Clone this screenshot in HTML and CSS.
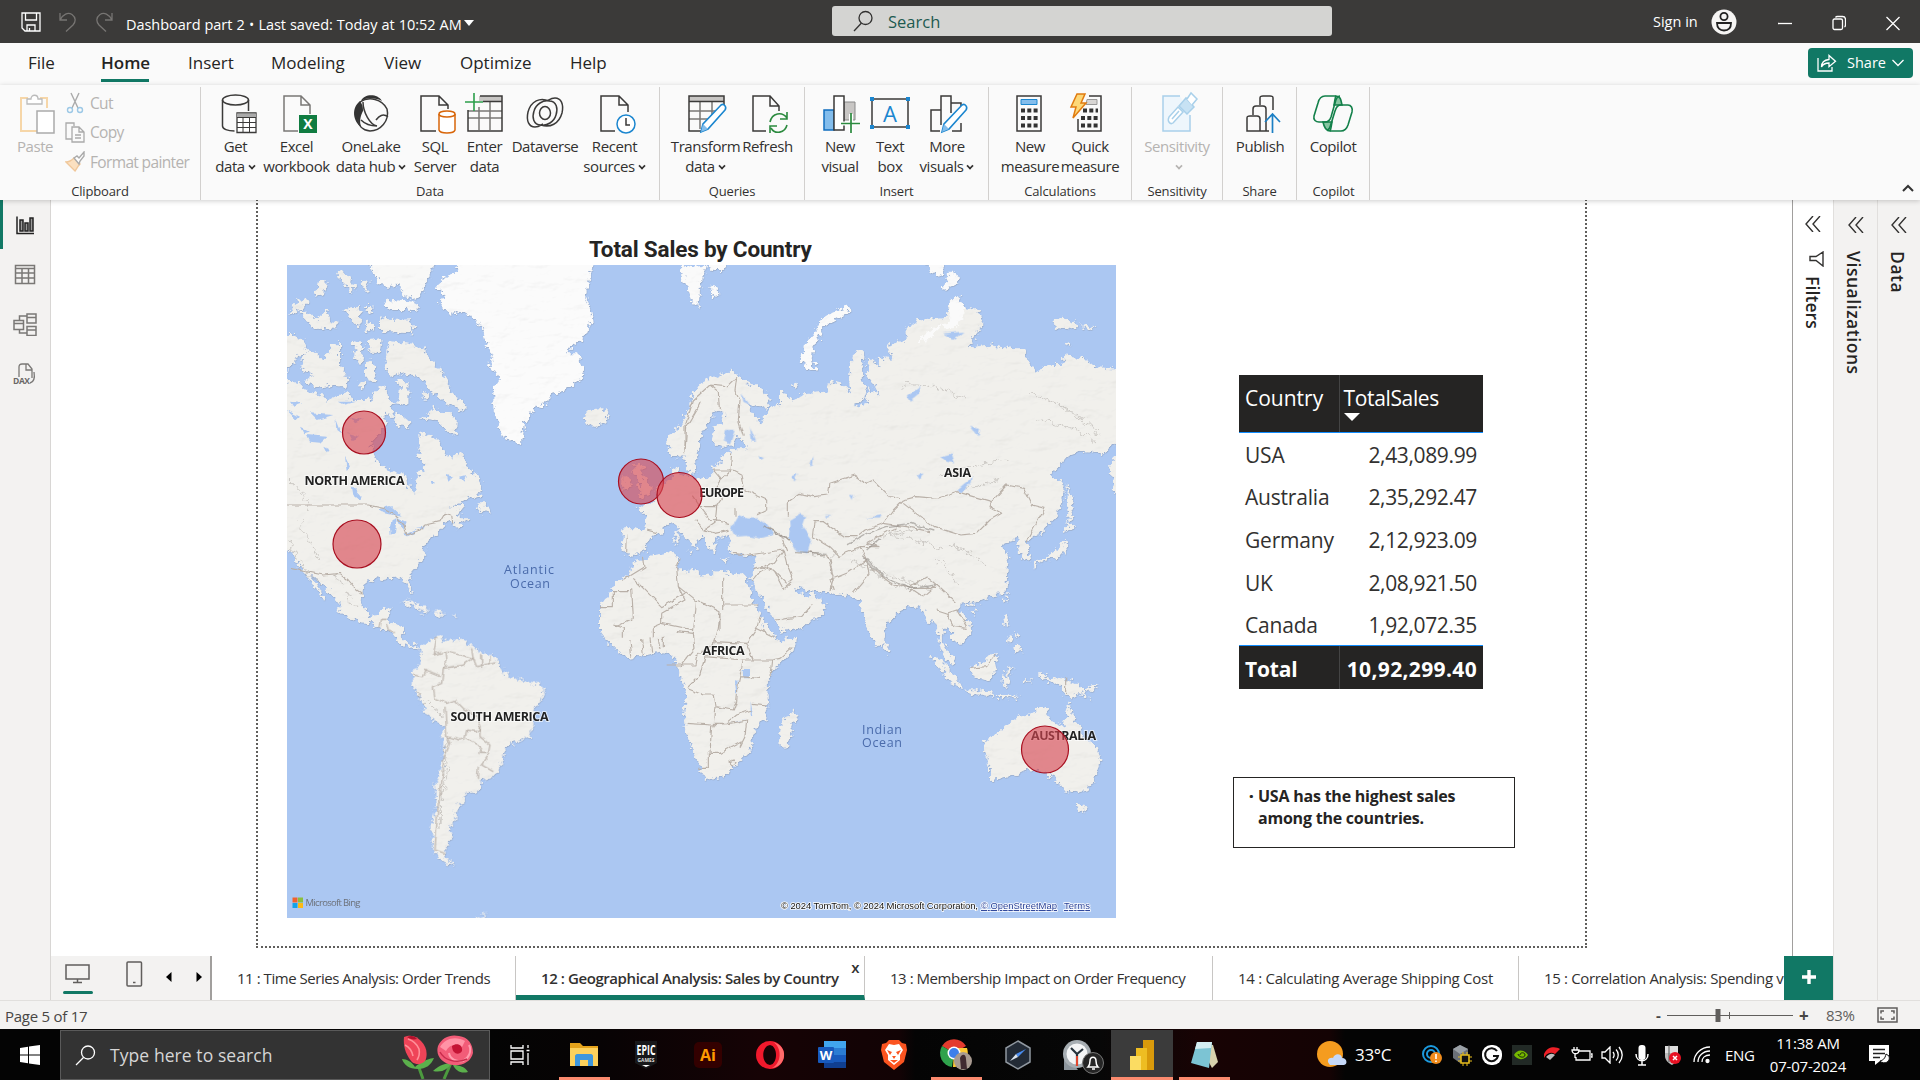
FILE: index.html
```html
<!DOCTYPE html>
<html lang="en">
<head>
<meta charset="utf-8">
<title>Dashboard part 2</title>
<link rel="stylesheet" href="styles.css">
</head>
<body>
<header class="titlebar">
  <div class="quick">
    <svg width="20" height="20" viewBox="0 0 20 20" class="ln white"><path d="M1 1h18v18H4l-3-3zM4.500 1v7h11V1M6 19v-6h8v6M8.500 19v-3"/></svg>
    <svg width="18" height="20" viewBox="0 0 18 20" class="ln dim"><path d="M1 1v7h7M1 8C4 2 9 0 13 2.500c4 3 4 7 1 10.500L7 19.500"/></svg>
    <svg width="18" height="20" viewBox="0 0 18 20" class="ln dim"><path d="M17 1v7h-7M17 8C14 2 9 0 5 2.500c-4 3-4 7-1 10.500l7 6.500"/></svg>
  </div>
  <span class="doc">Dashboard part 2 <b>•</b> Last saved: Today at 10:52 AM</span>
  <i class="caret"></i>
  <div class="search">
    <svg width="20" height="22" viewBox="0 0 20 22" class="ln"><circle cx="12.500" cy="8" r="6.500"/><path d="M8.500 13 1 21"/></svg>
    <span>Search</span>
  </div>
  <div class="account">
    <span class="signin">Sign in</span>
    <svg width="26" height="26" viewBox="0 0 26 26"><circle cx="13" cy="13" r="12.500" fill="#f6f5f4"/><g fill="none" stroke="#222" stroke-width="1.800"><circle cx="13" cy="7.500" r="3.600"/><path d="M6 14h14c0 5-3 7.500-7 7.500S6 19 6 14z"/></g></svg>
    <svg width="14" height="16" viewBox="0 0 14 16" class="ln white win"><path d="M0 8.500h14"/></svg>
    <svg width="14" height="16" viewBox="0 0 14 16" class="ln white win"><rect x="1" y="4" width="9.500" height="10.500" rx="1.500"/><path d="M3.500 2.500c.500-1 1-1 2-1h5c2 0 3 1 3 3v5c0 1 0 2-1 2.500"/></svg>
    <svg width="14" height="16" viewBox="0 0 14 16" class="ln white win"><path d="m.500 2 13 13M13.500 2l-13 13"/></svg>
  </div>
</header>

<nav class="menu">
  <a class="m1">File</a><a class="m2 on">Home</a><a class="m3">Insert</a><a class="m4">Modeling</a><a class="m5">View</a><a class="m6">Optimize</a><a class="m7">Help</a>
  <button class="share">
    <svg width="20" height="18" viewBox="0 0 20 18" class="ln white"><path d="M1 4v13h14v-4M4.500 13c0-5 3-7 7.500-7.500V1.500l6.500 5.700-6.500 5.500V9C8 9 6 10 4.500 13z"/></svg>
    <span>Share</span>
    <svg width="12" height="8" viewBox="0 0 12 8" class="ln white"><path d="m.500 1 5.500 5.500L11.500 1"/></svg>
  </button>
</nav>

<section class="ribbon">
  <div class="group clip">
    <div class="tools">
      <div class="tool off paste"><svg class="ic" viewBox="0 0 40 40"><g fill="none" stroke="#f6d6a8" stroke-width="2"><path d="M13 5H6v33h17M25 5h7v10"/></g><path d="M12 11V6h4c0-5 7-5 7 0h4v5z" fill="#fff" stroke="#bbb" stroke-width="1.300"/><rect x="22" y="18" width="17" height="22" fill="#fff" stroke="#aaa" stroke-width="1.500"/></svg><span>Paste</span></div>
      <div class="small">
        <div><svg width="20" height="22" viewBox="0 0 20 22" fill="none" stroke-width="1.400"><path d="m6 1 7 15M14 1 7 16" stroke="#aaa"/><circle cx="5" cy="18" r="2.500" stroke="#9cc8e6"/><circle cx="15" cy="18" r="2.500" stroke="#9cc8e6"/></svg>Cut</div>
        <div><svg width="20" height="22" viewBox="0 0 20 22" fill="none" stroke="#aaa" stroke-width="1.300"><path d="M7 18H1V2h8v3M7 6h7l5 5v10H7zM14 6v5h5M10 14h6M10 17h6"/></svg>Copy</div>
        <div><svg width="20" height="22" viewBox="0 0 20 22" fill="none" stroke-width="1.400"><path d="M1 11c3 0 5-1 8-4l6 6c-2 2-3 4-5 7z" fill="#fbe0c0" stroke="#f0c79a"/><path d="m9 7 3-2 2 2 5-6 0 4-4 5-1 3z" stroke="#aaa" fill="#fff"/></svg>Format painter</div>
      </div>
    </div>
    <div class="gl">Clipboard</div>
  </div>
  <div class="group data">
    <div class="tools">
      <div class="tool" style="width:53px"><svg class="ic" viewBox="0 0 40 40"><g class="ink"><ellipse cx="19.500" cy="7" rx="13" ry="5"/><path d="M6.500 7v26c0 3 5 5 12 5M32.500 7v11"/></g><path d="M21 20h19v19.500H21z" fill="#fff" stroke="#3b3a39" stroke-width="1.300"/><path d="M21 20.500h19v4H21z" fill="#aaa"/><path d="M21 24.500h19M21 29.500h19M21 34.500h19M27 24v15M33.500 24v15" stroke="#3b3a39"/></svg><span>Get<br>data<i class="v"></i></span></div>
      <div class="tool" style="width:69px"><svg class="ic" viewBox="0 0 40 40"><path class="ink lite" d="M21 38H7V3h17l9 9v9M24 3v9h9"/><path d="M22 22h18v18H22z" fill="#107c41"/><text x="31" y="36" text-anchor="middle" fill="#fff" font-size="14" font-weight="700">X</text></svg><span>Excel<br>workbook</span></div>
      <div class="tool" style="width:80px"><svg class="ic" viewBox="0 0 40 40"><path d="M10 8c3-7 16-8 21 0-6-3-14-4-21 0zM9 8C0 15 2 28 10 34c-2-7 0-12 2-16 0-5-1-7-3-10z" fill="#333"/><g class="ink"><path d="M9 9c9-6 22-3 27 7 3 12-7 22-17 22-8-1-12-6-12-12M12 9c0 10 7 23 14 24-8 0-12-2-16-6M37 24c-5-4-9-1-12 3"/></g></svg><span>OneLake<br>data hub<i class="v"></i></span></div>
      <div class="tool" style="width:48px"><svg class="ic" viewBox="0 0 40 40"><path class="ink" d="M21 38H6V3h18l9 9v4M24 3v9h9"/><path d="M24 21v16c1 4 15 4 16 0V21" fill="#fff" stroke="#d8660a" stroke-width="1.500"/><ellipse cx="32" cy="21" rx="8" ry="3" fill="#fff" stroke="#d8660a" stroke-width="1.500"/></svg><span>SQL<br>Server</span></div>
      <div class="tool" style="width:51px"><svg class="ic" viewBox="0 0 40 40"><path d="M14 3h23v5H14z" fill="#c8c6c4"/><path class="ink lite" d="M3 25h34M3 18h34M14 14v23M25 9v28"/><path class="ink" d="M15 3h22v35H3V17M18 8.500h19"/><path d="M9 0v18M0 9h18" stroke="#2c9f4b" stroke-width="1.600"/></svg><span>Enter<br>data</span></div>
      <div class="tool" style="width:70px"><svg class="ic" viewBox="0 0 40 40"><g class="ink"><path d="M24 8C15 4 6 8 3 19c-2 9 1 15 7 15 4 0 6-2 8-3M16 32c9 3 18-1 21-12 2-9-1-15-7-15-4 0-6 2-8 3M24 8c8 0 9 8 7 14-2 7-9 11-15 10M16 32c-8 0-9-8-7-14C11 11 18 7 24 8"/><ellipse cx="20" cy="20" rx="5.500" ry="6.500"/></g></svg><span>Dataverse</span></div>
      <div class="tool" style="width:69px"><svg class="ic" viewBox="0 0 40 40"><path class="ink" d="M20 38H6V3h18l9 9v7M24 3v9h9"/><circle cx="31" cy="31" r="9" fill="#fff" stroke="#1b86cf" stroke-width="1.500"/><path d="M31 25v7h4" class="ink"/></svg><span>Recent<br>sources<i class="v"></i></span></div>
    </div>
    <div class="gl">Data</div>
  </div>
  <div class="group queries">
    <div class="tools">
      <div class="tool" style="width:75px"><svg class="ic" viewBox="0 0 40 40"><path d="M3 3h35v5H3z" fill="#c8c6c4"/><path class="ink lite" d="M3 18h28M3 26h20M14 9v27M26 9v13"/><path class="ink" d="M15 38H3V3h35v10M3 8.500h35"/><path d="m15 39 2-8 18-19c3-2 6 2 4 5L22 36z" fill="#fff" stroke="#1b86cf" stroke-width="1.600"/><path d="m15 39 2-8 5 5z" fill="#83bdec"/></svg><span>Transform<br>data<i class="v"></i></span></div>
      <div class="tool" style="width:49px"><svg class="ic" viewBox="0 0 40 40"><path class="ink" d="M18 38H5V3h17l9 10v5M22 3v10h9"/><path d="M22 29c2-9 12-11 17-4M39 19v7h-7M39 32c-2 8-12 10-16 3M22 40v-7h7" fill="none" stroke="#2b8a3e" stroke-width="1.600"/></svg><span>Refresh</span></div>
    </div>
    <div class="gl">Queries</div>
  </div>
  <div class="group insert">
    <div class="tools">
      <div class="tool" style="width:54px"><svg class="ic" viewBox="0 0 40 40"><path d="M24 9h11v18H24z" fill="#c8c6c4" stroke="#888"/><path d="M4 17h10v20H4z" fill="#83bdec" stroke="#106ebe" stroke-width="1.500"/><path d="M14 3h10v34H14z" fill="#fff" stroke="#3b3a39" stroke-width="1.500"/><path d="M31 21v19M21 30.500h19" stroke="#fff" stroke-width="4"/><path d="M31 20v20M21 30.500h19" stroke="#2b8a3e" stroke-width="1.700"/></svg><span>New<br>visual</span></div>
      <div class="tool" style="width:46px"><svg class="ic" viewBox="0 0 40 40"><path class="ink" d="M2 6h36v28H2z"/><path d="M0 4h4v4H0zM36 4h4v4h-4zM0 32h4v4H0zM36 32h4v4h-4z" fill="#1b86cf"/><text x="20" y="28.500" text-anchor="middle" font-size="22" fill="#1b86cf">A</text></svg><span>Text<br>box</span></div>
      <div class="tool" style="width:68px"><svg class="ic" viewBox="0 0 40 40"><path class="ink" d="M14 17H4v21h9M14 32V3h10v17M24 10h10v6M34 30v8h-9"/><path d="m15 39 2-8 18-19c3-2 6 2 4 5L22 36z" fill="#fff" stroke="#1b86cf" stroke-width="1.600"/><path d="m15 39 2-8 5 5z" fill="#83bdec"/></svg><span>More<br>visuals<i class="v"></i></span></div>
    </div>
    <div class="gl">Insert</div>
  </div>
  <div class="group calc">
    <div class="tools">
      <div class="tool" style="width:60px"><svg class="ic" viewBox="0 0 40 40"><path class="ink" d="M7 3h24v35H7z"/><path d="M11 6.500h16v5H11z" fill="#83bdec" stroke="#1b86cf"/><path d="M11 17.500h17M11 25h17M11 32.500h17" stroke="#333" stroke-width="4" stroke-dasharray="4 2.300"/></svg><span>New<br>measure</span></div>
      <div class="tool" style="width:60px"><svg class="ic" viewBox="0 0 40 40"><path class="ink" d="M19 3h12v35H8V26"/><path d="M17 6.500h10v5H16z" fill="#d8d6d4" stroke="#999"/><path d="M13 17.500h15M11 25h17M11 32.500h17" stroke="#333" stroke-width="4" stroke-dasharray="4 2.300"/><path d="M7 1h8l-4 9h5L3 25l3-11H1z" fill="#fdd878" stroke="#e07b10" stroke-width="1.500"/></svg><span>Quick<br>measure</span></div>
    </div>
    <div class="gl">Calculations</div>
  </div>
  <div class="group sens">
    <div class="tools">
      <div class="tool off" style="width:80px"><svg class="ic" viewBox="0 0 40 40"><g fill="#fff" stroke="#a9d0ea" stroke-width="1.500"><path d="M23 3H6v35h27V22" fill="#eef6fc"/><path d="m12 24 9-10 5 5-10 11c-3 2-6-2-4-6zm3 2 7-8"/><path d="m22 13 7-8 8 9-7 7z" fill="#c7e2f4"/><path d="m30 6 4-6 6 6-5 6"/></g></svg><span>Sensitivity<br><i class="v"></i></span></div>
    </div>
    <div class="gl">Sensitivity</div>
  </div>
  <div class="group pub">
    <div class="tools">
      <div class="tool" style="width:64px"><svg class="ic" viewBox="0 0 40 40"><path class="ink" d="M20 38H7V25c0-2 1-2 3-2h7c2 0 3 1 3 3zM13 22v-6c0-2 1-3 3-3h7c2 0 3 1 3 3v22h-6M20 12V5c0-2 1-2 3-2h7c2 0 3 0 3 2v12M26 38h3"/><path d="M32.500 40V21M25 29l7.500-8 7.500 8" fill="none" stroke="#1b7fc4" stroke-width="1.700"/></svg><span>Publish</span></div>
    </div>
    <div class="gl">Share</div>
  </div>
  <div class="group cop">
    <div class="tools">
      <div class="tool" style="width:60px"><svg class="ic" viewBox="0 0 40 40"><g fill="none" stroke="#13804a" stroke-width="1.600"><path d="M23 3c4 0 5 3 6 9h-8c1-5 1-8 2-9zM17 38c-4 0-6-4-7-9h9c-1 5-1 8-2 9z" fill="#86c5a1"/><path d="M23 3H12C8 3 6 6 5 10L1 23c-1 4 2 6 5 6h6c4 0 5-2 6-5l4-14c1-4 2-7 5-7M17 38h11c4 0 6-3 7-6l4-13c1-4-1-7-4-7h-7c-4 0-5 3-6 6l-4 13c-1 4-2 6-4 6"/></g></svg><span>Copilot</span></div>
    </div>
    <div class="gl">Copilot</div>
  </div>
  <svg class="collapse" width="12" height="8" viewBox="0 0 12 8"><path d="m1 7 5-5 5 5" fill="none" stroke="#333" stroke-width="2"/></svg>
</section>

<main class="work">
  <aside class="rail">
    <div class="on"><svg width="24" height="24" viewBox="0 0 24 24" fill="#999" stroke="#222" stroke-width="1.500"><path d="M4 3.500v17h17" fill="none"/><path d="M7 7h3v11H7zM12 10h3v8h-3zM17 5h3v13h-3z"/></svg></div>
    <div><svg width="24" height="24" viewBox="0 0 24 24" fill="none" stroke="#7a7876" stroke-width="1.500"><path d="M2.500 3.500h19v18h-19zM2.500 6.500h19M2.500 11h19M2.500 16h19M9 6.500v15M15.500 6.500v15"/></svg></div>
    <div><svg width="24" height="24" viewBox="0 0 24 24" fill="none" stroke="#7a7876" stroke-width="1.500"><path d="M1 8.500h9.500v9H1zM14 2h9v9h-9zM14 14.500h9v9h-9zM1 11.500h9.500M14 5.500h9M14 18h9M6.500 8V4H14M6.500 18v3H14"/></svg></div>
    <div><svg width="24" height="24" viewBox="0 0 24 24" fill="none" stroke="#7a7876" stroke-width="1.300"><path d="M6 15V5c0-2 1-3 3-3h6l4 5v9M13 2v6h6M21 10c1 6 0 10-4 11"/><text x="0" y="22" fill="#6a6866" stroke="none" font-size="8.500" font-weight="700" textLength="17">DAX</text></svg></div>
  </aside>

  <div class="center">
    <div class="canvas">
      <div class="page"></div>
      <h2 class="vtitle">Total Sales by Country</h2>
      <svg class="map" width="829" height="653" viewBox="287 265 829 653">
        <defs>
          <filter id="coast" x="-5%" y="-5%" width="110%" height="110%">
            <feTurbulence type="fractalNoise" baseFrequency=".2" numOctaves="3" seed="4" result="n"/>
            <feDisplacementMap in="SourceGraphic" in2="n" scale="10" xChannelSelector="R" yChannelSelector="G" result="d"/>
            <feTurbulence type="fractalNoise" baseFrequency=".035 .07" numOctaves="4" seed="9" result="m"/>
            <feDiffuseLighting in="m" surfaceScale="2.600" lighting-color="#fff" result="l"><feDistantLight azimuth="225" elevation="62"/></feDiffuseLighting>
            <feColorMatrix in="l" values=".28 0 0 0 .76  0 .28 0 0 .76  0 0 .28 0 .76  0 0 0 1 0" result="l2"/>
            <feBlend in="d" in2="l2" mode="multiply" result="b"/>
            <feComposite in="b" in2="d" operator="in" result="c"/>
            <feDropShadow in="c" dx=".4" dy=".7" stdDeviation=".5" flood-color="#8a93a3" flood-opacity=".55"/>
          </filter>
          <filter id="rough"><feTurbulence type="fractalNoise" baseFrequency=".12" numOctaves="2" seed="2"/><feDisplacementMap in="SourceGraphic" scale="5" xChannelSelector="R" yChannelSelector="G"/></filter>
          <filter id="ridge"><feTurbulence type="fractalNoise" baseFrequency=".15" numOctaves="3" seed="6"/><feDisplacementMap in="SourceGraphic" scale="12" xChannelSelector="R" yChannelSelector="G"/></filter>
        </defs>
        <path fill="#abc7f2" d="M287 265h829v653H287z"/>
        <g filter="url(#coast)" fill="#f1f0ec">
          <g transform="translate(280 220) scale(.33333)">
            <path d="M0 480 60 490 75 510 120 525 145 540 175 525 205 520 215 540 260 540 285 520 300 500 320 505 325 540 355 550 360 500 345 480 360 475 385 495 385 545 365 555 345 540 335 565 340 595 320 580 310 590 320 620 300 640 275 665 275 690 290 720 305 740 330 750 365 758 385 775 390 805 405 825 415 790 410 770 430 745 440 735 415 710 420 680 415 645 440 640 475 660 490 700 515 710 540 695 555 720 560 740 590 765 610 800 605 820 570 835 540 850 500 865 545 855 555 865 535 870 540 895 575 895 560 905 525 925 515 900 495 910 480 925 465 950 440 960 430 990 440 1000 425 1020 390 1060 385 1075 398 1115 390 1120 375 1085 355 1072 330 1075 310 1080 290 1075 270 1080 250 1095 245 1140 255 1170 270 1188 295 1185 308 1165 335 1162 325 1190 320 1205 345 1210 370 1225 365 1255 375 1265 395 1278 410 1270 425 1282 415 1285 400 1282 385 1285 365 1272 345 1255 330 1235 300 1225 270 1210 240 1207 210 1195 175 1175 180 1155 150 1120 125 1090 105 1070 90 1055 100 1080 120 1110 137 1142 125 1135 100 1095 80 1065 60 1040 40 1010 0 960z"/>
            <path d="M375 370 430 380 440 410 475 440 500 480 515 520 560 555 550 575 520 560 490 540 450 510 430 480 400 465 370 460 330 470 315 440 320 390 330 365 355 370zM65 420 80 390 110 400 130 420 150 390 155 370 180 370 180 440 205 475 195 500 150 495 110 505 75 480 100 465 60 445zM0 345 45 345 80 370 75 400 50 410 35 440 0 470zM215 370 245 360 250 400 240 435 220 410 230 390zM265 360 305 355 300 395 270 395zM255 425 280 420 290 480 270 485 255 465zM300 290 330 300 395 298 400 340 300 335zM170 155 200 160 230 200 215 215 180 180zM240 180 265 185 265 210 245 205zM110 190 140 180 135 220 105 230zM25 285 50 240 85 235 70 265zM55 275 85 275 110 300 140 265 150 300 175 305 160 330 100 325 80 300zM190 270 235 260 245 300 235 320 215 300zM255 255 280 255 280 280 260 275zM258 305 280 310 278 335 260 330zM425 515 445 520 440 540 425 535zM340 590 355 580 390 605 385 620 350 615zM455 555 480 575 515 580 530 600 528 645 500 630 470 600 420 595 455 580zM235 485 255 485 255 505 240 505zM590 850 620 850 635 880 590 870zM910 590 930 570 960 565 985 575 980 600 950 620 925 612z"/>
            <path fill="#f8f8f7" d="M260 125 470 125 445 170 430 210 410 240 370 225 360 190 330 200 300 195 280 155zM310 250 330 240 410 245 410 275 380 270 330 270z"/>
            <path fill="#fbfbfb" d="M535 125 938 125 930 180 915 230 930 260 935 310 905 360 880 375 860 400 890 400 912 450 905 475 860 510 820 520 800 550 760 565 735 610 725 675 700 665 670 650 650 600 640 560 640 510 660 480 625 430 640 410 615 360 610 330 585 295 540 275 510 285 475 245 500 230 465 200 500 170 530 155z"/>
            <path d="M1060 730 1080 725 1090 740 1085 765 1100 780 1105 800 1118 805 1110 825 1070 832 1085 815 1070 805 1085 790 1070 775 1060 760zM1030 770 1050 765 1055 795 1030 810zM1183 940 1193 940 1192 975 1183 970z"/>
            <path d="M1240 725 1230 760 1200 775 1195 740 1180 745 1178 775 1150 790 1130 810 1130 830 1110 850 1070 865 1095 880 1100 910 1100 930 1060 925 1030 925 1025 985 1030 1000 1060 1005 1090 1000 1110 955 1130 945 1160 920 1180 900 1200 900 1210 925 1240 970 1255 965 1300 920 1400 900 1400 780 1240 780z"/>
          </g>
          <g transform="translate(680 240) scale(.33333)">
            <path d="M20 690 40 698 50 690 45 660 60 620 60 590 80 560 95 530 105 510 130 515 125 545 105 560 95 590 105 615 130 620 160 615 170 590 190 600 200 625 165 625 120 650 125 670 95 680 100 700 85 715 55 712 40 725 10 720-10 715-10 690-25 700-10 800-20 845-5 870 30 905 40 925 52 922 42 905 60 908 45 890 15 860 20 845 45 860 75 895 85 925 100 940 110 925 100 905 120 890 150 885 155 905 140 920 155 940 200 945 230 945 220 985 210 1020 700 1100 980 1060 980 1010 960 960 985 945 945 920 980 905 1020 895 1010 920 1035 965 1050 960 1040 905 1080 880 1130 830 1150 770 1150 725 1110 710 1160 650 1200 635 1270 640 1330 590 1330 390 1250 385 1220 360 1160 345 1140 375 1110 375 1070 395 1035 350 1040 325 1000 325 920 315 860 325 880 300 910 250 895 210 850 200 830 165 805 190 800 230 720 240 680 265 680 300 620 315 640 360 590 350 600 385 565 350 560 400 580 430 600 470 565 445 560 490 535 500 520 492 550 480 560 450 545 420 550 345 535 330 515 350 505 420 515 460 490 435 450 425 440 455 370 460 335 485 320 460 300 455 300 495 260 510 245 550 215 520 200 490 240 505 265 500 270 475 240 440 200 430 180 405 150 395 100 410 60 430 35 470 20 520 0 560-40 590-35 630-25 655 10 645z"/>
            <path fill="#fafafa" d="M365 365 375 310 400 285 415 245 460 215 510 195 515 210 480 230 440 250 420 285 400 320 395 360 410 395 390 390zM0 85 20 75 50 80 75 75 70 110 60 150 55 205 40 190 25 150 10 120zM90 140 115 145 118 165 100 170zM75 65 140 65 130 90 95 90zM735 65 790 65 785 110 760 100zM800 110 820 90 838 130 790 150zM805 190 830 165 850 200 850 240 820 265 780 260 740 300 715 305 760 265 810 240z"/>
            <path d="M1120 235 1150 230 1165 245 1190 240 1185 265 1150 260 1125 270zM1205 250 1240 265 1230 272 1205 265zM1155 305 1175 315 1165 322zM1160 730 1172 760 1178 810 1168 850 1160 790zM1165 850 1185 862 1165 878 1150 870zM1155 900 1160 935 1130 950 1100 960 1075 970 1065 990 1062 970 1100 950 1130 930 1145 905zM1290 670 1320 640 1320 750 1300 760zM335 430 348 432 342 442zM20 935 40 935 35 942zM120 955 145 960 135 965z"/>
          </g>
          <g transform="translate(680 560) scale(.33333)">
            <path d="M215 55 235 0 400-60 960-60 985 0 980 60 960 85 920 115 880 135 850 130 830 145 870 190 875 220 840 255 815 235 820 215 790 205 785 240 800 270 825 300 820 318 790 290 780 250 775 210 760 180 740 190 730 150 700 130 690 110 690 135 660 155 620 190 615 235 600 260 585 250 560 200 550 150 530 140 545 125 520 110 460 100 400 95 350 80 340 55 330 55 345 90 375 115 400 100 437 130 425 165 370 200 300 215 285 180 260 140 230 90z"/>
            <path d="M0 35 50 30 60 50 95 45 110 30 150 40 200 45 205 70 215 110 240 160 260 200 285 225 290 245 355 230 340 270 290 320 260 370 265 440 260 480 225 500 215 560 185 600 130 650 75 660 65 630 40 580 20 520 12 470 20 390-5 340-10 300-30 280-60 275-100 285-155 295-200 265-240 215-240 140-200 80-155 45-140 5-100 0-75-15-20-25-5 0z"/>
            <path d="M915 540 960 515 990 490 1020 465 1035 475 1060 460 1075 440 1105 445 1100 470 1150 500 1165 430 1180 470 1195 490 1215 540 1250 560 1262 600 1240 660 1225 690 1190 700 1150 690 1130 660 1120 640 1105 655 1095 635 1040 630 1000 650 930 660 930 620 912 570zM1188 732 1218 735 1212 758 1200 758zM340 450 352 465 335 510 320 560 300 565 297 530 305 490zM612 245 625 262 625 278 613 275zM752 285 780 300 820 340 845 375 840 382 810 365 780 325zM845 390 880 388 935 398 940 408 880 402zM950 405 1020 408 1010 415 955 414zM870 325 905 310 935 280 958 288 945 310 950 330 930 362 885 355zM965 345 985 350 975 330 1010 322 985 342 990 370 970 378zM1070 340 1090 340 1100 360 1140 352 1190 370 1235 418 1200 400 1170 412 1150 400 1140 375 1105 365zM1215 385 1245 375 1255 365 1250 385 1225 392zM970 165 985 170 985 200 975 205zM1000 262 1020 255 1027 275 1005 280zM985 225 1000 235 990 248zM1005 215 1018 225 1012 235zM872 150 885 152 880 165zM972 110 985 105 978 130zM1025 360 1060 362 1040 368z"/>
          </g>
          <g transform="translate(280 560) scale(.33333)">
            <path d="M420 265 470 225 490 240 550 240 590 270 640 290 665 320 670 340 720 360 780 375 800 395 760 450 760 490 745 530 680 560 670 600 640 650 600 660 605 690 555 705 555 730 530 735 525 780 505 800 520 820 495 875 500 895 525 915 490 905 460 870 455 800 470 740 465 680 490 600 490 500 440 460 410 400 395 370 400 330 425 310zM365 128 390 122 430 142 450 150 430 153 400 138zM455 155 480 150 500 162 470 168zM415 166 430 166 425 171zM515 165 528 166 520 171zM575 1085 595 1070 620 1060 600 1080z"/>
          </g>
        </g>
        <g filter="url(#ridge)" fill="none" stroke="#a9a49f" stroke-width="1" opacity=".5">
          <path d="M850 560c15 8 25 12 35 15s30 10 48 12M853 553c20-14 45-24 70-24M880 535c20 0 40 5 60 14M866 565c14 14 32 22 50 25M1030 392c20 8 45 20 70 40M1040 420c20 5 40 8 55 22M1060 405c14 12 25 18 40 30M765 530c10 3 20 6 30 14M795 548c10 5 25 8 40 8M940 475c20-4 45-14 70-15M960 490c15-2 30-6 44-14M440 830c0-30 5-60 6-90M448 760c0 20-8 40-9 70M417 690c8 12 18 22 28 28M290 540c5 20 18 35 30 45M300 520c5 15 12 30 20 40M335 575c8 12 14 24 22 34M290 480c8 8 15 16 20 30M935 560c10 4 20 14 22 26M950 545c14 5 25 10 35 22M905 385c20-4 40 4 60 14"/>
        </g>
        <g filter="url(#rough)" fill="#abc7f2">
          <g transform="translate(280 220) scale(.33333)"><path d="M295 868 330 858 365 890 340 885 315 880zM335 900 350 895 345 935 332 945 330 920zM350 890 380 905 370 930 360 915zM372 945 405 930 405 938 375 950zM405 925 435 918 430 928zM215 795 245 830 240 840 220 825zM195 710 210 740 200 750zM80 645 140 650 120 668 90 665zM20 570 60 590 50 600zM170 545 230 545 190 555zM90 580 160 585 110 600zM500 765 520 770 505 785zM60 620 90 635 70 640zM210 590 250 600 225 610zM170 600 185 640 172 630zM130 680 150 690 140 700zM450 780 465 785 455 795zM540 770 560 765 550 785zM205 640 240 650 215 660zM30 545 70 550 40 560z"/></g>
          <g transform="translate(680 240) scale(.33333)"><path d="M160 850 175 825 200 835 235 835 260 850 280 885 240 895 200 888 165 890 155 870zM330 840 360 822 378 830 368 860 395 895 382 940 348 930 325 890 332 860zM830 750 878 710 875 725 845 758zM870 560 900 570 895 592zM780 650 815 640 825 670 800 665zM680 470 720 440 720 460 690 485zM235 645 252 655 240 660zM210 560 228 605 215 605zM135 570 165 570 150 610 130 600zM335 710 355 700 340 725zM390 680 400 650 400 675zM560 835 605 825 600 835zM790 280 850 275 820 300zM510 765 522 765 518 780zM185 460 210 495 190 485zM435 828 455 828 440 833zM710 705 730 700 720 720z"/></g>
          <g transform="translate(680 560) scale(.33333)"><path d="M188 330 210 330 210 355 190 355zM165 365 172 360 175 400 168 395zM212 420 220 470 212 465zM150 490 200 475 170 485z"/></g>
        </g>
        <g filter="url(#rough)" fill="none" stroke="#b9b0a8" stroke-width="3.400" stroke-linejoin="round">
          <g transform="translate(280 220) scale(.33333)"><path d="M20 855H265L310 865 345 885 372 915 380 945 420 930 435 915 480 905 495 880 515 885 518 910M30 1045 130 1065 180 1060 205 1080 230 1110 245 1120M1215 690 1220 620 1255 560 1262 545M1042 940 1040 1000M1100 930 1130 938M1060 1075 1145 1160 1215 1120M1055 1105 1060 1195 1005 1220M1090 1005 1095 1040 1030 1080"/></g>
          <g transform="translate(680 240) scale(.33333)"><path d="M15 640 15 560 40 480 90 435 115 455 118 505M90 435 140 440 170 410 165 450 180 480 175 540 190 590M100 690 150 690 155 640M100 690 125 720 155 690 185 705 195 750 260 780 260 810 230 825M125 720 110 740M40 770 60 800 110 800 130 770M60 800 90 840 150 850M110 800 105 850 75 870 45 840M75 870 105 880 150 870M165 805 165 830M265 865 330 900M325 830 325 785 360 760 400 770 445 765 450 730 525 705 560 730 580 720 630 770 660 775M400 890 405 845 430 845 495 890 530 890 555 870 610 850 640 810 670 780 710 770 770 775 830 755 935 785 980 735 1030 745 1055 795 1095 805 1070 850 1040 905M670 790 720 830 760 860 840 885 890 880 930 840 965 820 930 800 935 785M610 850 680 860 750 875M400 890 450 920 480 950 500 935 540 920 560 960 500 1000 450 1020 460 1050M385 935 440 945 455 1000M310 930 320 970 340 1020M155 940 210 945 310 930 280 970 240 995 220 1020M300 880 320 930M240 980 280 990 320 1030M555 960 580 990 640 1035 700 1045 770 1045M540 920 600 920 560 910 650 860"/></g>
          <g stroke="#8f8a85" stroke-width="4" opacity=".6" transform="translate(680 240) scale(.33333)"><path d="M550 950 580 985 630 1020 690 1045 770 1035M500 915 560 880 620 860 690 850 760 870M560 930 600 895M250 860 330 900M345 935 440 940M560 955 610 1010"/></g>
          <g transform="translate(680 560) scale(.33333)"><path d="M128 50V150M128 135H235M50 120 120 155 115 205 105 245 50 285 45 315H-40M120 155V210M50 120 40 220-10 215M40 220 45 265 0 320M105 245 200 250 230 205 240 170M200 250 220 300 275 300 300 295 340 260M230 205 290 235M275 300 270 345M75 290 190 300 175 370 170 420 160 450 105 440 100 405 70 405 20 385M75 290 60 345 20 385M190 300H225M180 350 240 355M215 430 260 435M20 490 95 495 150 490 200 480 195 530 180 560M95 495 90 580 85 580 85 625 55 625M90 580 120 580 185 545M105 440 100 490 140 490 170 465 215 450M150 605 160 600 168 608 155 617zM-55 160 15 120-5 80-10 20 0-5M-55 160V190M-55 190-80 200-80 235M-5 80 50 125M-55 190 40 210M-65 235-60 270M-90 235-85 275M-115 240-110 285M-50 230-50 265M-150 240-145 290M-200 195-170 205-170 230M-240 140-200 140-200 95-150 95M290 180 365 170 400 130M285 35 310 85 340 60M220 30 260 15M450 0 460 55 450 90M520 100 570 40 560 0M690 100 700 90 730 110 770 75 740 50 690 80M770 75 830 130M770 150 800 160 830 150 860 200M800 160 820 200 860 205M1157 352V405M872 325 920 320 945 285"/></g>
          <g transform="translate(280 560) scale(.33333)"><path d="M470 230 460 285 495 275 500 315 490 325 485 370 460 380 465 415 500 430 525 420 550 445 590 470 600 500 595 515 560 510 555 535 540 540 500 530 495 440M500 275 580 295 575 265M580 295 590 320 650 305M605 285 605 320M630 288 630 315M490 325 550 315 580 295M430 330 480 350M400 345 430 350 440 330M560 535 605 560 600 580 625 580 630 555 600 530 600 500M630 580 605 615 640 635M595 620 592 655M500 530 510 550 490 600 490 640 475 730 470 800 465 870 495 880M300 205 305 175 320 175M320 190 325 210 345 215"/></g>
        </g>
        <g class="lands">
          <text x="304.500" y="485" textLength="100">NORTH AMERICA</text><text x="699" y="497" textLength="45">EUROPE</text><text x="944" y="476.500" textLength="27">ASIA</text><text x="702.500" y="655" textLength="42">AFRICA</text><text x="450.500" y="721" textLength="98">SOUTH AMERICA</text><text x="1031" y="740" textLength="65">AUSTRALIA</text>
        </g>
        <g class="seas">
          <text x="504" y="573.500" textLength="50">Atlantic</text><text x="510" y="587.500" textLength="40">Ocean</text><text x="862" y="733.500" textLength="40">Indian</text><text x="862" y="747" textLength="40">Ocean</text>
        </g>
        <g fill="#d64550" fill-opacity=".62" stroke="#a80f20" stroke-width="1.200">
          <circle cx="364" cy="432.500" r="21.500"/><circle cx="357" cy="544" r="24"/><circle cx="641" cy="481.500" r="22.500"/><circle cx="679.500" cy="495" r="22.500"/><circle cx="1045" cy="749.500" r="23.500"/>
        </g>
        <path fill="#f1622c" d="M292.500 897.500h5v5h-5z"/><path fill="#8bbf3c" d="M298 897.500h5v5h-5z"/><path fill="#13a3e8" d="M292.500 903h5v5h-5z"/><path fill="#fdb913" d="M298 903h5v5h-5z"/>
        <text x="305.500" y="906" class="bing" textLength="55">Microsoft Bing</text>
        <text x="781" y="909" class="credit" textLength="197">© 2024 TomTom, © 2024 Microsoft Corporation,</text>
        <text x="981" y="909" class="credit lk" textLength="76">© OpenStreetMap</text>
        <text x="1064" y="909" class="credit lk" textLength="26">Terms</text>
      </svg>
      <table class="sales">
        <thead><tr><th>Country</th><th>TotalSales<i></i></th></tr></thead>
        <tbody>
          <tr><td>USA</td><td>2,43,089.99</td></tr>
          <tr><td>Australia</td><td>2,35,292.47</td></tr>
          <tr><td>Germany</td><td>2,12,923.09</td></tr>
          <tr><td>UK</td><td>2,08,921.50</td></tr>
          <tr><td>Canada</td><td>1,92,072.35</td></tr>
        </tbody>
        <tfoot><tr><td>Total</td><td>10,92,299.40</td></tr></tfoot>
      </table>
      <div class="note"><b>·</b><p>USA has the highest sales<br>among the countries.</p></div>
    </div>
  </div>

  <aside class="pane filters"><svg class="chev" width="16" height="16" viewBox="0 0 16 16"><path d="M8 0 1 8l7 8M15 0 8 8l7 8"/></svg><svg class="funnel" width="15" height="16" viewBox="0 0 15 16"><path d="M14 1v14L7 9.500H1v-4h6z"/></svg><span>Filters</span></aside>
  <aside class="pane viz"><svg class="chev" width="16" height="16" viewBox="0 0 16 16"><path d="M8 0 1 8l7 8M15 0 8 8l7 8"/></svg><span>Visualizations</span></aside>
  <aside class="pane fields"><svg class="chev" width="16" height="16" viewBox="0 0 16 16"><path d="M8 0 1 8l7 8M15 0 8 8l7 8"/></svg><span>Data</span></aside>

  <div class="tabs">
    <div class="modes">
      <div class="desk"><svg width="26" height="20" viewBox="0 0 26 20" fill="none" stroke="#605e5c" stroke-width="1.500"><path d="M1 1h23v14H1zM12.500 15v3M8 18.500h9"/></svg></div>
      <svg width="17" height="26" viewBox="0 0 17 26" fill="none" stroke="#605e5c" stroke-width="1.500"><rect x="1" y="1" width="14.500" height="24" rx="1"/><path d="M7 21.500h2.500"/></svg>
      <svg class="ar" width="6" height="10" viewBox="0 0 6 10"><path d="M5.500 0v10L0 5z"/></svg>
      <svg class="ar" width="6" height="10" viewBox="0 0 6 10"><path d="M.5 0v10L6 5z"/></svg>
    </div>
    <div class="tab t11"><span>11 : Time Series Analysis: Order Trends</span></div>
    <div class="tab t12 on"><span>12 : Geographical Analysis: Sales by Country</span><em>x</em></div>
    <div class="tab t13"><span>13 : Membership Impact on Order Frequency</span></div>
    <div class="tab t14"><span>14 : Calculating Average Shipping Cost</span></div>
    <div class="tab t15"><span>15 : Correlation Analysis: Spending v</span></div>
    <div class="add"><svg width="14" height="14" viewBox="0 0 14 14"><path d="M7 0v14M0 7h14" stroke="#fff" stroke-width="3.400"/></svg></div>
  </div>
</main>

<footer class="status">
  <span class="pg">Page 5 of 17</span>
  <b class="minus">-</b>
  <svg width="126" height="16" viewBox="0 0 126 16"><path d="M0 8.500h126M62.500 5v7" stroke="#605e5c"/><path d="M48.500 2h5v13h-5z" fill="#605e5c"/></svg>
  <b class="plus">+</b>
  <span class="pct">83%</span>
  <svg width="21" height="16" viewBox="0 0 21 16" fill="none" stroke="#605e5c" stroke-width="1.500"><path d="M1 1h19v14H1z"/><path d="M7 4H4v2.500M14 4h3v2.500M7 12H4V9.500M14 12h3V9.500"/></svg>
</footer>

<footer class="taskbar">
  <svg class="start" width="20" height="20" viewBox="0 0 20 20" fill="#fff"><path d="M0 3l8-1.200V9.500H0zM9 1.600 20 0v9.500H9zM0 10.500h8v7.700L0 17zM9 10.500h11V20L9 18.400z"/></svg>
  <div class="find">
    <svg width="21" height="21" viewBox="0 0 21 21" class="ln white"><circle cx="13" cy="7.500" r="6.500"/><path d="M8.500 12.500 1 20"/></svg>
    <span>Type here to search</span>
    <svg class="rose" width="74" height="44" viewBox="0 0 74 44">
      <path d="M17 30l5 14M50 28l-7 16" stroke="#4c9a3f" stroke-width="3"/><path d="M1 24c5 0 10 3 13 8 4-3 10-8 19-9-3 7-8 11-16 11C8 34 3 30 1 24zM32 36c6-6 14-8 18-8-2 6-9 10-18 8zM52 30c7 0 12 2 15 7-7 2-12-1-15-7z" fill="#5bb04c"/>
      <path d="M3 2c8-3 13 0 17 4 6 6 7 14 4 20-4 4-9 4-13 1C5 20 2 12 3 2z" fill="#ef4458"/><path d="M7 4c6 2 9 5 11 10 1 5 0 8-2 11M4 10c4 2 7 6 8 11" stroke="#ff8f98" stroke-width="1.600" fill="none"/><path d="M6 2c4-2 8-1 10 2-4 1-7 0-10-2z" fill="#b3102c"/>
      <path d="M37 11C41 2 50-1 58 1c9 1 14 8 14 17-2 9-11 13-20 12-10-1-18-9-15-19z" fill="#f25c78"/><path d="M39 12c5-9 16-11 25-6l-3 6c-7-4-13-2-16 4z" fill="#ff93a6"/><path d="M68 10c3 6 0 13-6 16-7 1-13-2-14-8" fill="none" stroke="#ff9cae" stroke-width="2"/><path d="M51 11c5-4 11-1 10 5-3 5-10 3-10-5z" fill="#c41435"/><path d="M39 17c4 8 16 12 27 7" stroke="#c92b4d" stroke-width="1.500" fill="none"/>
    </svg>
  </div>
  <div class="apps">
    <div class="view"><svg width="20" height="20" viewBox="0 0 20 20" class="ln white"><path d="M1 0v3h12V0M1 6h12v8H1zM1 20v-3h12v3M18 0v3M18 8v12M16.500 5.500h3"/></svg></div>
    <div class="app run"><svg width="28" height="26" viewBox="0 0 28 26"><path d="M0 1h10l3 3h15v8H0z" fill="#e5a31b"/><path d="M0 6h28v18H0z" fill="#fdd15c"/><path d="M5 23v-9c0-1 1-2 2-2h14c1 0 2 1 2 2v10h-5v-6h-8v6H5z" fill="#3f97dd"/></svg></div>
    <div class="app"><svg width="24" height="28" viewBox="0 0 24 28"><path d="M1 0h22v22l-11 6-11-6z" fill="#18181a"/><text x="12" y="13.500" text-anchor="middle" textLength="19" lengthAdjust="spacingAndGlyphs" font-size="14" font-weight="700" fill="#fff">EPIC</text><text x="12" y="21" text-anchor="middle" textLength="17" lengthAdjust="spacingAndGlyphs" font-size="6" font-weight="700" fill="#ddd">GAMES</text><path d="M8 24h8l-4 2z" fill="#fff"/></svg></div>
    <div class="app"><svg width="28" height="26" viewBox="0 0 28 26"><rect width="28" height="26" rx="5" fill="#330000"/><text x="14" y="18.500" text-anchor="middle" font-size="16" font-weight="700" fill="#ff9a00">Ai</text></svg></div>
    <div class="app"><svg width="28" height="28" viewBox="0 0 28 28"><path fill-rule="evenodd" d="M14 0a14 14 0 1 1 0 28 14 14 0 0 1 0-28zm0 4C5 5 5 23 14 24c8-1 8-19 0-20z" fill="#f0192c"/><path d="M17 1c16 4 14 24-1 26 10-5 10-21 1-26z" fill="#ff6b6b"/></svg></div>
    <div class="app"><svg width="28" height="28" viewBox="0 0 28 28"><path d="M6 0h22v8H6z" fill="#41a5ee"/><path d="M6 7h22v7H6z" fill="#2b7cd3"/><path d="M6 14h22v7H6z" fill="#185abd"/><path d="M6 21h22v6H6z" fill="#103f91"/><rect y="6" width="16" height="16" rx="1" fill="#185abd"/><text x="8" y="19" text-anchor="middle" font-size="13" font-weight="700" fill="#fff">W</text></svg></div>
    <div class="app"><svg width="26" height="30" viewBox="0 0 26 30"><path d="m8 0h10l3 3 4 1 1 6-3 12-10 8L3 22 0 10l1-6 4-1z" fill="#fb5420"/><path d="m13 5 5-1 4 6-3 5 0 5-6 5-6-5V15L4 10l4-6z" fill="#fff"/><path d="m6 10 5 2-2 3zM20 10l-5 2 2 3zM11 16h4l-2 3zM9 20l4 3 4-3" fill="#fb5420"/></svg></div>
    <div class="app run"><svg width="32" height="32" viewBox="0 0 32 32"><path d="M14 14 2 7a14 14 0 0 1 24 0z" fill="#e33b2e"/><path d="M14 14 2 7a14 14 0 0 0 10 21z" fill="#2fa24c"/><path d="M14 9h13c3 9-3 19-14 19z" fill="#fcc934"/><circle cx="14" cy="14" r="6.500" fill="#fff"/><circle cx="14" cy="14" r="5" fill="#3d7fea"/><circle cx="23" cy="22" r="9" fill="#a89a90"/><path d="M20 19c2-5 6-4 6 1l1 10h-6z" fill="#402a30"/></svg></div>
    <div class="app"><svg width="28" height="30" viewBox="0 0 28 30"><path d="m14 1 12 7v14l-12 7-12-7V8z" fill="#232b36" stroke="#9098a0" stroke-width="1.500"/><path d="M22 9 14 17l-2-3z" fill="#4a8df0"/><path d="m6 21 6-7 2 3z" fill="#dce4ee"/></svg></div>
    <div class="app clock"><svg width="42" height="36" viewBox="0 0 42 36"><path d="M2 14v19h14z" fill="#8c959c"/><circle cx="15" cy="17" r="14" fill="#a7aeb3"/><circle cx="15" cy="17" r="10.500" fill="#f4f5f6"/><path d="M9 11l6 6 6-5M15 17v12" stroke="#26323b" stroke-width="2.200" fill="none"/><path d="M15 19v10" stroke="#e2462e" stroke-width="2"/><circle cx="31" cy="26" r="10.500" fill="#252525" stroke="#777"/><path d="M26 30h10c-2-2-2-3-2-6 0-5-6-5-6 0 0 3 0 4-2 6zM30 32h3" fill="none" stroke="#fff" stroke-width="1.500"/></svg></div>
    <div class="app run act"><svg width="26" height="32" viewBox="0 0 26 32"><path d="M14 1h11v30H14z" fill="#d99a0b"/><path d="M7 9h11v22H7z" fill="#eebd22"/><path d="M1 17h11v14H1z" fill="#fbdc62"/></svg></div>
    <div class="app run"><svg width="30" height="28" viewBox="0 0 30 28"><path d="m9 1 15 3 5 17-6 6z" fill="#d9d2ad"/><path d="M8 1h15l-3 26L2 22z" fill="#7cc4d4"/><path d="M8 1h15l-1 6L6 8z" fill="#d4eef2"/></svg></div>
  </div>
  <div class="weather"><svg width="30" height="28" viewBox="0 0 30 28"><circle cx="13" cy="13" r="13" fill="#f59c1f"/><path d="M13 24c-5-5 0-8 3-7 2-6 9-4 9 0 5 0 6 6 2 7z" fill="#c5d8f8"/></svg><span>33°C</span></div>
  <div class="tray">
    <i><svg width="22" height="22" viewBox="0 0 22 22"><circle cx="10" cy="10" r="8" fill="none" stroke="#1c9ade" stroke-width="2"/><circle cx="10" cy="10" r="4" fill="none" stroke="#1c9ade" stroke-width="2"/><circle cx="15" cy="14" r="6" fill="#f08c1c"/><path d="M15 10v5M15 16.500V18" stroke="#fff" stroke-width="1.600"/></svg></i>
    <i><svg width="22" height="22" viewBox="0 0 22 22"><path d="m9 1 8 4v9l-8 5-7-5V5z" fill="#6b7078"/><path d="m9 1 8 4-8 5-7-5z" fill="#9aa0a6"/><path d="M10 11h8v8h-8z" fill="#111" stroke="#e6bc1c" stroke-width="1.600"/><path d="M12 8v3M16 8v3M12 19v3M16 19v3M18 13h3M18 17h3M7 13h3M7 17h3" stroke="#e6bc1c"/></svg></i>
    <i><svg width="20" height="20" viewBox="0 0 20 20"><rect width="20" height="20" rx="9" fill="#fff"/><path d="M15 6a6.500 6.500 0 1 0 1 5h-5" stroke="#111" stroke-width="2" fill="none"/></svg></i>
    <i><svg width="20" height="20" viewBox="0 0 20 20"><path fill="#222a26" d="M0 0h20v20H0z"/><path d="M2 10c3-6 10-6 14 0-4 6-11 5-14 0z" fill="#76b900"/><path d="M8 10c0-3 5-3 5 0s-6 3-7-1" fill="none" stroke="#17210c"/></svg></i>
    <i><svg width="20" height="20" viewBox="0 0 20 20"><path d="M2 9c3-8 12-8 16-5l-5 5C8 6 4 9 2 13z" fill="#ed2027"/><path d="M4 12c4-4 6-4 9-2l-5 5z" fill="#bbb"/></svg></i>
    <i><svg width="22" height="16" viewBox="0 0 22 16" class="ln white"><path d="M8 4h11v9H5v-3M20 7h1v3h-1M3 0v3M6 0v3M1 3h7c0 5-7 5-7 0zM4 7v4"/></svg></i>
    <i><svg width="22" height="18" viewBox="0 0 22 18" class="ln white"><path d="M1 6h3l5-5v16l-5-5H1zM12 6c1.500 2 1.500 4 0 6M15 3.500c3 3 3 8 0 11M18 1c4 5 4 11 0 16"/></svg></i>
    <i><svg width="14" height="22" viewBox="0 0 14 22"><rect x="3.500" y="1" width="7" height="15" rx="3" fill="#fff"/><path d="M1 10c0 9 12 9 12 0M7 17v4M3 21h8" fill="none" stroke="#fff" stroke-width="1.500"/></svg></i>
    <i><svg width="18" height="22" viewBox="0 0 18 22"><path d="M2 2h13v7H2z" fill="#ddd"/><path d="M2 9h13v8l-6 4c-4-2-7-5-7-9z" fill="#bbb"/><path d="M6 1v17" stroke="#555"/><circle cx="12" cy="14" r="6" fill="#e81123"/><path d="m10 12 4 4M14 12l-4 4" stroke="#fff" stroke-width="1.500"/></svg></i>
    <i><svg width="18" height="18" viewBox="0 0 18 18" class="ln white"><path d="M1 16C1 8 8 1 17 1M5 16c0-6 5-11 12-11M9 16c0-4 3-7 8-7"/><circle cx="14.500" cy="15" r="1.500" fill="#fff"/></svg></i>
  </div>
  <span class="lang">ENG</span>
  <div class="time"><span>11:38 AM</span><span>07-07-2024</span></div>
  <svg class="bell" width="22" height="22" viewBox="0 0 22 22"><path d="M0 1h20v16h-9l-5 4v-4H0z" fill="#fff"/><path d="M4 5.500h12M4 9.500h12M4 13.500h7" stroke="#222" stroke-width="1.500"/><path d="M17 10c-1 5-3 6-6 7 4 4 11 1 9-5z" fill="#fff" stroke="#111"/></svg>
</footer>
</body>
</html>
```
FILE: styles.css
```css
* { box-sizing: border-box; margin: 0; padding: 0; }
body { width: 1920px; height: 1080px; overflow: hidden; display: flex; flex-direction: column; background: #fff; color: #323130; font-family: "Open Sans", "Noto Sans", sans-serif; font-stretch: 88%; font-size: 15px; white-space: nowrap; }
svg { display: block; flex: none; }
i, em { font-style: normal; }
.ln { fill: none; stroke: #323130; stroke-width: 1.3; }
.white { stroke: #fff; }
.dim { stroke: #777573; }

.titlebar { height: 43px; background: #3b3a39; display: flex; align-items: center; color: #fff; flex: none; }
.quick { display: flex; gap: 18px; padding-left: 21px; width: 126px; }
.doc { width: 330px; font-size: 14.5px; padding-top: 5px; word-spacing: .3px; letter-spacing: -.04px; }
.doc b { font-size: 10px; vertical-align: 2px; margin: 0 1px; }
.caret { margin-left: 8px; border: 5px solid transparent; border-top: 6px solid #fff; border-bottom: 0; margin-top: 3px; }
.search { margin-left: 358px; width: 500px; height: 30px; background: #d4d4d2; border-radius: 3px; display: flex; align-items: center; gap: 15px; padding-left: 21px; color: #1d5a50; font-size: 16.5px; margin-top: -1px; }
.account { display: flex; align-items: center; margin-left: 321px; }
.signin { width: 58px; font-size: 14.500px; }
.win { margin-left: 40.500px; margin-top: 2px; }
.win + .win { margin-left: 40px; }

.menu { height: 42px; background: #fafafa; display: flex; flex: none; font-size: 17px; color: #252423; padding-left: 28px; line-height: 39px; }
.menu a { display: block; height: 39px; }
.m1 { width: 73px; } .m2 { width: 48px; margin-right: 39px; } .m3 { width: 83px; } .m4 { width: 113px; } .m5 { width: 76px; } .m6 { width: 110px; } .m7 { width: 1164px; }
.menu .on { font-weight: 600; border-bottom: 3px solid #117865; }
.share { width: 105px; height: 30px; margin: 5px 0 0 74px; border: 0; border-radius: 4px; background: #117865; color: #fff; font: inherit; font-size: 14.5px; line-height: 30px; display: flex; align-items: center; padding-left: 9px; gap: 6px; }
.share span { margin-left: 4px; }

.ribbon { height: 115px; background: #fafafa; display: flex; position: relative; z-index: 2; flex: none; box-shadow: 0 1px 5px #0003; }
.group { height: 113px; border-right: 1px solid #d2d0ce; margin-top: 2px; flex: none; display: flex; flex-direction: column; }
.ribbon .group::before { content: ""; height: 6px; }
.tools { display: flex; height: 91px; }
.clip { width: 201px; } .data { width: 459px; padding-left: 8px; } .queries { width: 145px; padding-left: 8px; } .insert { width: 184px; padding-left: 8px; } .calc { width: 143px; padding-left: 11px; } .sens { width: 91px; padding-left: 5px; } .pub { width: 74px; padding-left: 5px; } .cop { width: 73px; padding-left: 6px; }
.gl { text-align: center; font-size: 13px; line-height: 15px; letter-spacing: -.15px; }
.data .gl, .queries .gl, .insert .gl { margin-left: -8px; }
.calc .gl { margin-left: -11px; } .sens .gl, .pub .gl, .cop .gl { margin-left: -5px; }
.tool { display: flex; flex-direction: column; align-items: center; text-align: center; font-size: 15px; line-height: 20px; flex: none; letter-spacing: -.42px; }
.tool span { margin-top: 3px; }
.ic { width: 40px; height: 40px; overflow: visible; letter-spacing: 0; }
.ink { fill: none; stroke: #3b3a39; stroke-width: 1.5; }
.lite { stroke: #7a7876; }
.off { color: #b5b3b1; }
.paste { width: 70px; }
.v { display: inline-block; width: 6px; height: 6px; border: solid currentColor; border-width: 0 2px 2px 0; transform: rotate(45deg) scale(.85); margin: 0 1px 3px 4px; }
.small { display: flex; flex-direction: column; margin-left: -5px; color: #b5b3b1; font-size: 15.500px; letter-spacing: -.65px; }
.small div { height: 30px; display: flex; align-items: center; gap: 5px; margin-top: -1px; margin-bottom: 1px; }
.small div:first-child { height: 22px; }
.small div:nth-child(2) { margin-top: 2px; }
.collapse { position: absolute; right: 6px; bottom: 8px; }

.work { height: 801px; flex: none; display: grid; grid-template-columns: 51px 1741px 41px 44px 43px; grid-template-rows: 756px 44px; border-bottom: 1px solid #e1dfdd; }
.rail { grid-row: 1 / 3; background: #f3f2f1; border-right: 1px solid #d8d6d4; }
.rail div { height: 50px; display: flex; align-items: center; padding: 0 0 0 13px; }
.rail .on { border-left: 3px solid #117865; padding-left: 10px; height: 49px; }
.canvas { position: relative; height: 756px; overflow: hidden; }
.page { position: absolute; left: 205px; top: -4px; width: 1331px; height: 752px; border: 2px dotted #605e5c; }
.vtitle { position: absolute; left: 538px; top: 35px; font: 700 22.500px/28px Roboto, sans-serif; font-stretch: 100%; color: #252423; letter-spacing: -.18px; }
.map { position: absolute; left: 236px; top: 65px; }
.lands text { font-size: 12.500px; font-weight: 700; fill: #222; paint-order: stroke; stroke: #fff9; stroke-width: 2px; }
.seas text { font-size: 12.5px; fill: #4a6bab; }
.bing { font-size: 9.500px; fill: #6b7078; }
.credit { font: 9.500px "Liberation Sans", sans-serif; fill: #111; paint-order: stroke; stroke: #fff; stroke-width: 1.500px; }
.lk { fill: #263f97; text-decoration: underline; }
.sales { position: absolute; left: 1188px; top: 175px; width: 244px; border-collapse: collapse; table-layout: fixed; font-size: 21px; color: #323130; }
.sales th { background: #252423; color: #fff; font-weight: 400; text-align: left; height: 57px; padding: 9px 5px 0 6px; vertical-align: top; line-height: 28px; border-bottom: 1px solid #118dff; }
.sales th + th { letter-spacing: -.35px; padding-left: 4px; }
.sales th:first-child { width: 100px; }
.sales th + th, .sales tfoot td + td { border-left: 1px solid #444; }
.sales th i { display: block; width: 0; border: 8px solid transparent; border-top-color: #fff; border-bottom: 0; margin-top: 1px; }
.sales td { height: 42.800px; padding: 2px 6px 0; letter-spacing: -.2px; }
.sales td + td { text-align: right; letter-spacing: -.35px; }
.sales tfoot td { background: #252423; color: #fff; font-weight: 700; border-top: 1px solid #118dff; height: 43px; }
.sales tfoot td + td { letter-spacing: .35px; padding-left: 0; }
.note { position: absolute; left: 1182px; top: 577px; width: 282px; height: 71px; border: 1px solid #252423; display: flex; padding: 7px 0 0 15px; font-size: 16px; line-height: 22px; font-weight: 700; color: #252423; letter-spacing: -.22px; }
.note b { width: 9px; }

.pane { background: #f3f2f1; border-left: 1px solid #e1dfdd; display: flex; flex-direction: column; align-items: center; padding-top: 17px; grid-row: 1 / 3; color: #252423; }
.filters { background: #fff; border-left: 1px solid #a19f9d; grid-row: 1; padding-top: 16px; }
.pane span { writing-mode: vertical-rl; font-weight: 600; font-size: 17.500px; line-height: 22px; margin-top: 18px; letter-spacing: .55px; margin-right: 3px; }
.chev, .funnel { fill: none; stroke: #323130; stroke-width: 1.400; }
.funnel { margin: 19px 0 0 6px; }
.filters span { margin: 9px 0 0; letter-spacing: .1px; }

.tabs { grid-row: 2; grid-column: 2 / 4; width: 1782px; display: flex; position: relative; z-index: 1; background: #fff; }
.rail { grid-column: 1; } .center { grid-column: 2; grid-row: 1; } .filters { grid-column: 3; } .viz { grid-column: 4; } .fields { grid-column: 5; }
.modes { width: 161px; background: #f3f2f1; border-right: 2px solid #a19f9d; display: flex; align-items: center; padding: 0 8px 8px 12px; flex: none; justify-content: space-between; }
.desk { position: relative; padding: 2px; margin-right: 19px; }
.desk::after { content: ""; position: absolute; left: 0; right: 0; top: 29px; height: 3px; border-radius: 2px; background: #117865; }
.ar { margin: 5px 0 0 10px; }
.tab { border-right: 1px solid #c8c6c4; flex: none; line-height: 44px; padding-left: 25px; position: relative; font-size: 15px; letter-spacing: -.46px; }
.t11 { width: 304px; } .t12 { width: 349px; } .t13 { width: 348px; } .t14 { width: 306px; letter-spacing: -.27px; } .t15 { width: 265px; border: 0; overflow: hidden; letter-spacing: -.35px; }
.tab.on { font-weight: 600; border-bottom: 5px solid #117865; letter-spacing: -.42px; }
.tab em { position: absolute; right: 5px; top: -11px; }
.add { width: 49px; background: #117865; display: flex; align-items: center; justify-content: center; padding-bottom: 3px; }

.status { height: 28px; background: #f3f2f1; display: flex; align-items: center; flex: none; font-size: 15px; color: #484644; }
.pg { width: 1656px; padding-left: 5px; padding-top: 2px; letter-spacing: -.25px; }
.minus { width: 11px; } .plus { width: 33px; padding-left: 6px; font-size: 17px; } .pct { width: 51px; color: #605e5c; letter-spacing: -.3px; }

.taskbar { height: 51px; flex: none; background: linear-gradient(90deg, #040404 490px, #070304 600px, #160305 760px, #120305 900px, #040404 915px, #070707 1100px, #180304 1200px, #140304 1330px, #040404 1345px); display: flex; align-items: center; color: #fff; }
.start { margin: 0 20px; }
.find { width: 430px; height: 50px; background: #333; border: 1px solid #5a5a5a; margin-top: 1px; display: flex; align-items: center; padding-left: 14px; gap: 14px; font-size: 17.500px; color: #d6d6d6; letter-spacing: .08px; }
.rose { margin-left: auto; margin-right: 14px; margin-top: 4px; }
.apps { display: flex; height: 51px; padding-top: 1px; }
.apps svg { overflow: visible; }
.view { width: 62px; display: flex; align-items: center; padding-left: 20px; margin-right: 1px; }
.app { width: 62px; position: relative; display: flex; align-items: center; justify-content: center; }
.clock { padding-left: 6px; }
.run::after { content: ""; position: absolute; bottom: 0; left: 6px; right: 5px; height: 3px; background: #fb8a6e; }
.act { background: #3b3b3b; } .act::after { left: 0; right: 0; }
.weather { display: flex; align-items: center; gap: 8px; margin-left: 82px; width: 100px; font-size: 17px; letter-spacing: -.3px; }
.tray { display: flex; }
.tray i { width: 30px; display: flex; align-items: center; justify-content: center; }
.lang { margin-left: 8px; width: 43px; font-size: 15px; letter-spacing: -.3px; }
.time { display: flex; flex-direction: column; align-items: center; width: 80px; font-size: 15px; line-height: 23px; letter-spacing: -.2px; }
.bell { margin-left: 21px; }
```
